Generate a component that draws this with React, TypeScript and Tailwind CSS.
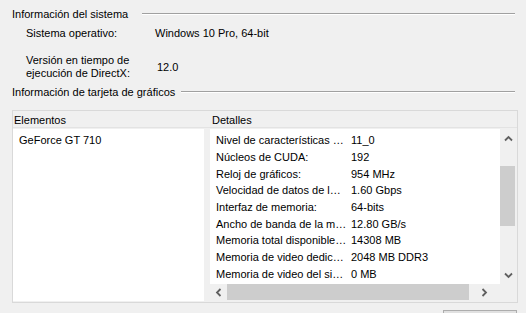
import React from "react";

const rows: [string, string][] = [
  ["Nivel de características …", "11_0"],
  ["Núcleos de CUDA:", "192"],
  ["Reloj de gráficos:", "954 MHz"],
  ["Velocidad de datos de l…", "1.60 Gbps"],
  ["Interfaz de memoria:", "64-bits"],
  ["Ancho de banda de la m…", "12.80 GB/s"],
  ["Memoria total disponible…", "14308 MB"],
  ["Memoria de video dedic…", "2048 MB DDR3"],
  ["Memoria de video del si…", "0 MB"],
];

function Chevron({ dir }: { dir: "up" | "down" | "left" | "right" }) {
  const rot = { up: 0, down: 180, left: -90, right: 90 }[dir];
  return (
    <svg width="9" height="9" viewBox="0 0 9 9" style={{ transform: `rotate(${rot}deg)` }}>
      <path d="M1 6.5 L4.5 3 L8 6.5" fill="none" stroke="#606060" strokeWidth="1.8" />
    </svg>
  );
}

export default function App() {
  return (
    <div
      className="w-[526px] h-[313px] bg-[#f0f0f0] overflow-hidden flex flex-col text-[11px] text-black"
      style={{ fontFamily: '"Liberation Sans", Arial, sans-serif' }}
    >
      {/* Heading 1 */}
      <div className="flex items-center h-4 mt-[6px] pl-[12px] pr-[11px] leading-4">
        <span>Información del sistema</span>
        <div className="flex-1 ml-[14px] h-[2px] border-t border-[#a0a0a0] border-b border-b-white" />
      </div>
      <div className="flex h-4 mt-[3px] leading-4">
        <span className="pl-[26px] w-[155px]">Sistema operativo:</span>
        <span>Windows 10 Pro, 64-bit</span>
      </div>
      <div className="flex items-center mt-[13px] h-[26px]">
        <div className="pl-[26px] w-[157px] leading-[13px]">
          <div>Versión en tiempo de</div>
          <div>ejecución de DirectX:</div>
        </div>
        <span className="leading-4">12.0</span>
      </div>
      <div className="flex items-center h-4 mt-[4px] pl-[12px] pr-[11px] leading-4">
        <span>Información de tarjeta de gráficos</span>
        <div className="flex-1 ml-[6px] h-[2px] border-t border-[#a0a0a0] border-b border-b-white" />
      </div>
      {/* Frame */}
      <div className="mt-[10px] ml-[12px] w-[506px] h-[193px] shrink-0 border border-[#d9d9d9] flex flex-col">
        <div className="h-[17px] border-b border-[#e3e3e3] flex items-center leading-4 shrink-0 pt-[2px]">
          <span className="pl-[1px] w-[199px]">Elementos</span>
          <span>Detalles</span>
        </div>
        <div className="flex flex-1 pt-[1px]">
          <div className="w-[191px] bg-white mb-[1px] pl-[6px] pt-[3px] leading-[16.7px]">GeForce GT 710</div>
          <div className="ml-[6px] flex-1 flex flex-col">
            <div className="flex h-[155px]">
              <div className="w-[290px] bg-white overflow-hidden pt-[3px]">
                {rows.map(([k, v]) => (
                  <div key={k} className="flex h-[16.7px] items-center leading-4 whitespace-nowrap">
                    <span className="pl-[6px] w-[141px] pr-[2px] truncate">{k}</span>
                    <span>{v}</span>
                  </div>
                ))}
              </div>
              <div className="w-[17px] flex flex-col items-center">
                <div className="h-[17px] flex items-center justify-center pt-[2px]">
                  <Chevron dir="up" />
                </div>
                <div className="mt-[20px] w-[15px] h-[60px] bg-[#cdcdcd] self-start" />
                <div className="mt-auto h-[17px] flex items-center justify-center">
                  <Chevron dir="down" />
                </div>
              </div>
            </div>
            <div className="flex h-[16px] items-center">
              <div className="w-[17px] flex items-center justify-center">
                <Chevron dir="left" />
              </div>
              <div className="w-[242px] h-full bg-[#cdcdcd]" />
              <div className="w-[31px] flex items-center justify-center">
                <Chevron dir="right" />
              </div>
            </div>
          </div>
        </div>
      </div>
      <div className="mt-[7px] ml-[443px] w-[74px] h-[20px] border border-[#adadad] bg-[#e1e1e1] shrink-0" />
    </div>
  );
}
